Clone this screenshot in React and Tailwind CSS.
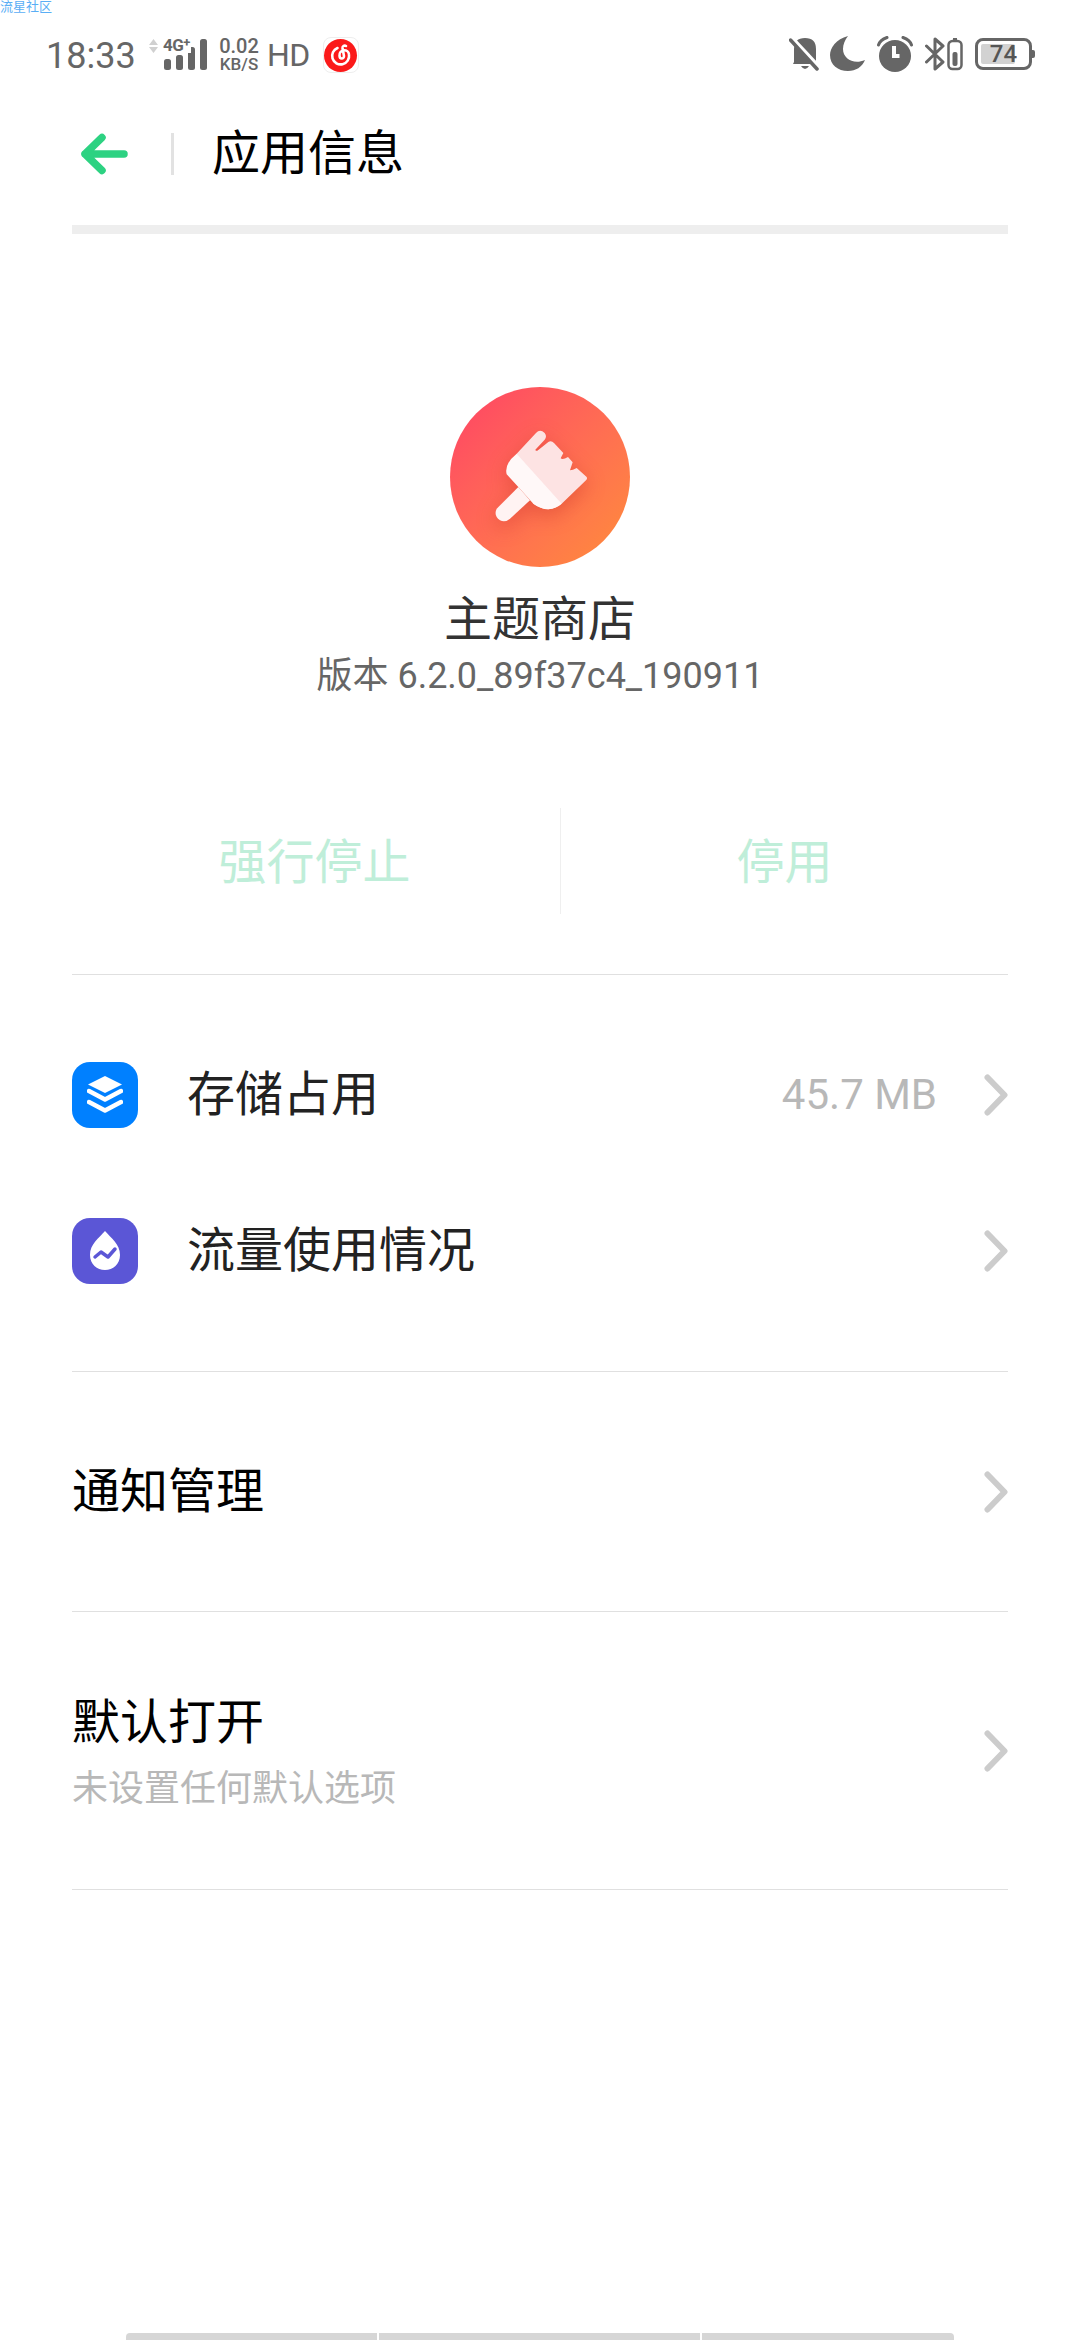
const FONT = 'font-["Roboto","Noto_Sans_CJK_SC",sans-serif]';

function Chevron() {
  return (
    <svg width="24" height="42" viewBox="0 0 24 42" fill="none" className="shrink-0">
      <path d="M3.5 3.5 L20.5 21 L3.5 38.5" stroke="#cccccc" strokeWidth="6" strokeLinecap="round" strokeLinejoin="round" />
    </svg>
  );
}

function Signal() {
  return (
    <div className="relative ml-[11px] flex h-[32px] items-start">
      <svg width="9" height="14" viewBox="0 0 9 14" fill="#d0d0d0">
        <path d="M0 6 L4.5 0 L9 6 Z M0 8 L9 8 L4.5 14 Z" />
      </svg>
      <svg width="43" height="31" viewBox="0 0 43 31" fill="#666666" className="ml-[6px]">
        <rect x="0" y="20" width="7" height="11" rx="2.5" />
        <rect x="12" y="16" width="7" height="15" rx="2.5" />
        <rect x="24" y="8" width="7" height="23" rx="2.5" />
        <rect x="36" y="0" width="7" height="31" rx="2.5" />
      </svg>
      <span className="absolute left-[14px] top-[-2px] bg-white pr-[1px] text-[17px] font-bold leading-[16px] tracking-[-0.5px] text-[#666666]">
        4G<span className="align-top text-[13px] leading-[12px]">+</span>
      </span>
    </div>
  );
}

function AppIcon() {
  return (
    <div className="flex h-[180px] w-[180px] items-center justify-center rounded-full bg-gradient-to-br from-[#ff4065] to-[#ff8c38]">
      <svg width="180" height="180" viewBox="0 0 540 540" className="drop-shadow-[0_6px_10px_rgba(190,40,30,0.35)]">
        <path
          d="M205 300 L140 365 Q130 385 150 400 Q165 408 180 395 L240 340 Z"
          fill="#fff3f3"
        />
        <path
          d="M200 200 L258 138 Q270 125 284 138 Q292 148 284 158 L256 188 Q258 194 264 190 L295 165 Q304 160 312 168 L340 198 L332 214 Q338 220 354 210 L368 226 L360 250 Q368 250 380 243 L410 270 Q413 275 408 280 L335 350 Q320 362 295 367 Q272 366 250 350 Z"
          fill="#fde3e3"
        />
        <path
          d="M200 200 L335 350 Q320 364 295 367 Q272 366 250 350 L205 300 L170 262 Q162 230 200 200 Z"
          fill="#fff8f8"
        />
      </svg>
    </div>
  );
}

function Row({ icon, label, value }) {
  return (
    <div className="flex h-[156px] items-center">
      {icon}
      <span className="ml-[49px] flex-1 text-[48px] leading-none text-[#222222]">{label}</span>
      {value && <span className="mr-[47px] text-[42px] leading-none text-[#b8b8b8]">{value}</span>}
      <Chevron />
    </div>
  );
}

export default function App() {
  return (
    <div className={`${FONT} relative flex min-h-[2340px] flex-col bg-white`}>
      <span className="absolute left-0 top-0 text-[13px] leading-[14px] text-[#5aaef5]">流星社区</span>

      {/* status bar */}
      <div className="flex h-[108px] items-center justify-between pl-[46px] pr-[48px]">
        <div className="flex items-center pt-[2px]">
          <span className="w-[92px] pt-[1px] text-[36px] leading-none text-[#666666]">18:33</span>
          <Signal />
          <div className="ml-[12px] flex w-[40px] flex-col items-center font-medium text-[#666666]">
            <span className="text-[20px] leading-[18px]">0.02</span>
            <span className="text-[17px] leading-[18px]">KB/S</span>
          </div>
          <span className="ml-[8px] text-[32px] leading-none tracking-[-0.5px] text-[#666666]">HD</span>
          <div className="ml-[13px] flex h-[36px] w-[36px] items-center justify-center rounded-[8px] border border-[#eeeeee] bg-white">
            <div className="flex h-[33px] w-[33px] items-center justify-center rounded-full bg-[#fb1a1a]">
              <svg width="24" height="24" viewBox="0 0 24 24" fill="none" stroke="#ffffff" strokeWidth="2.6" strokeLinecap="round">
                <path d="M8.5 5 A8.5 8.5 0 1 0 20 11.5 A4.6 4.6 0 0 0 10.5 12.5 C10.5 16.5 15 16.5 15 13 L13.5 5 C13.3 3 15.5 2 17 3" />
              </svg>
            </div>
          </div>
        </div>
        <div className="flex items-center">
          <svg width="30" height="34" viewBox="0 0 30 34" fill="#666666">
            <path d="M16 1 Q27 1 27 12 L27 25 L29 27 L4 27 L5 25 L5 12 Q5 1 16 1 Z" />
            <path d="M12 29 L20 29 Q16 35 12 29 Z" />
            <path d="M3 1 L31 31" stroke="#ffffff" strokeWidth="4" />
            <path d="M1.5 3 L28 32" stroke="#666666" strokeWidth="3.5" strokeLinecap="round" />
          </svg>
          <svg width="36" height="36" viewBox="0 0 36 36" fill="#666666" className="ml-[11px]">
            <path d="M18 0 C6 3 0 12 0 19 C0 29 8 35 18 35 C26 35 32 31 35 24 C24 29 13 23 13 13 C13 8 15 4 18 0 Z" />
          </svg>
          <svg width="36" height="36" viewBox="0 0 36 36" fill="#666666" className="ml-[11px]">
            <circle cx="18" cy="20" r="16" />
            <path d="M15 10 L19 10 L19 18 L22.5 18 L22.5 22 L15 22 Z" fill="#ffffff" />
            <path d="M1.5 9 Q3 4 10 1.5 M34.5 9 Q33 4 26 1.5" fill="none" stroke="#666666" strokeWidth="3" strokeLinecap="round" />
          </svg>
          <svg width="38" height="34" viewBox="0 0 38 34" fill="none" stroke="#666666" className="ml-[12px]">
            <path d="M1.5 9 L18 25 L10 32 L10 2 L18 9 L1.5 25" strokeWidth="3" strokeLinejoin="round" strokeLinecap="round" />
            <rect x="23.5" y="4" width="13" height="28" rx="4" strokeWidth="2.5" />
            <rect x="28" y="1" width="4" height="3" fill="#666666" stroke="none" />
            <rect x="27.5" y="15" width="5" height="14" rx="2" fill="#666666" stroke="none" />
          </svg>
          <div className="relative ml-[12px] flex h-[32px] w-[57px] items-center rounded-[8px] border-[3px] border-[#666666] p-[3px]">
            <div className="h-full w-[34px] rounded-[2px] bg-[#d2d2d2]" />
            <span className="absolute inset-0 flex items-center justify-center text-[24px] font-medium leading-none text-[#555555]">74</span>
            <div className="absolute right-[-6px] h-[8px] w-[3px] rounded-r-[2px] bg-[#666666]" />
          </div>
        </div>
      </div>

      {/* toolbar */}
      <div className="flex h-[92px] items-center pl-[81px]">
        <svg width="48" height="42" viewBox="0 0 48 42" fill="none">
          <path d="M21 4.5 L4 21 L21 37.5 M4 21 L43 21" stroke="#2dd282" strokeWidth="7.5" strokeLinecap="round" strokeLinejoin="round" />
        </svg>
        <div className="ml-[42px] h-[42px] w-[3px] bg-[#e2e2e2]" />
        <span className="ml-[38px] text-[48px] leading-none text-black">应用信息</span>
      </div>

      <div className="mx-[72px] mt-[25px] h-[9px] bg-[#eeeeee]" />

      {/* app header */}
      <div className="mt-[153px] flex flex-col items-center">
        <AppIcon />
        <span className="mt-[29px] text-[48px] leading-[48px] text-[#333333]">主题商店</span>
        <span className="mt-[12px] text-[36px] leading-[40px] text-[#666666]">版本 6.2.0_89f37c4_190911</span>
      </div>

      {/* actions */}
      <div className="mx-[72px] mt-[112px] flex h-[167px] border-b border-[#e0e0e0] pb-[60px]">
        <div className="flex flex-1 items-center justify-center pr-[3px] pt-[4px] text-[48px] leading-none text-[#bfeed9]">
          <span>强行停止</span>
        </div>
        <div className="w-px bg-[#efefef]" />
        <div className="flex w-[447px] items-center justify-center pt-[4px] text-[48px] leading-none text-[#bfeed9]">
          <span>停用</span>
        </div>
      </div>

      {/* list */}
      <div className="mx-[72px] mt-[42px] border-b border-[#e0e0e0] pb-[42px]">
        <Row
          label="存储占用"
          value="45.7 MB"
          icon={
            <div className="flex h-[66px] w-[66px] items-center justify-center rounded-[18px] bg-[#0080ff]">
              <svg width="36" height="38" viewBox="0 0 36 38" fill="#ffffff">
                <path d="M18 0 L35 8.5 L18 17 L1 8.5 Z" />
                <path d="M2 15 L18 23.5 L34 15 M2 26 L18 34.5 L34 26" fill="none" stroke="#ffffff" strokeWidth="4.5" strokeLinecap="round" strokeLinejoin="round" />
              </svg>
            </div>
          }
        />
        <Row
          label="流量使用情况"
          icon={
            <div className="flex h-[66px] w-[66px] items-center justify-center rounded-[18px] bg-[#5b56d6]">
              <svg width="32" height="40" viewBox="0 0 32 40" fill="#ffffff">
                <path d="M16 0 C10 7 1 13 1 24 C1 33 8 39 16 39 C24 39 31 33 31 24 C31 13 22 7 16 0 Z" />
                <path d="M6 26 L12 21 L19 26 L26 18" fill="none" stroke="#5b56d6" strokeWidth="3.5" strokeLinecap="round" strokeLinejoin="round" />
              </svg>
            </div>
          }
        />
      </div>

      <div className="mx-[72px] flex h-[240px] items-center justify-between border-b border-[#e0e0e0]">
        <span className="text-[48px] leading-none text-black">通知管理</span>
        <Chevron />
      </div>

      <div className="mx-[72px] flex h-[278px] items-center justify-between border-b border-[#e0e0e0]">
        <div className="flex flex-col pt-[4px]">
          <span className="text-[48px] leading-none text-black">默认打开</span>
          <span className="mt-[24px] text-[36px] leading-none text-[#b8b8b8]">未设置任何默认选项</span>
        </div>
        <Chevron />
      </div>

      {/* gesture bar */}
      <div className="mt-auto flex justify-center gap-[2px]">
        <div className="h-[7px] w-[251px] rounded-tl-[4px] bg-[#d6d6d6]" />
        <div className="h-[7px] w-[321px] bg-[#d6d6d6]" />
        <div className="h-[7px] w-[252px] rounded-tr-[4px] bg-[#d6d6d6]" />
      </div>
    </div>
  );
}
